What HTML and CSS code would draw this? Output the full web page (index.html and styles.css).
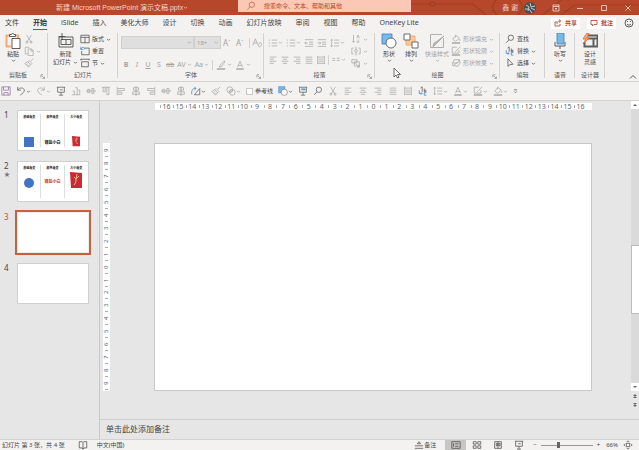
FILE: index.html
```html
<!DOCTYPE html>
<html lang="zh-CN">
<head>
<meta charset="utf-8">
<meta name="viewport" content="width=device-width, initial-scale=1">
<title>新建 Microsoft PowerPoint 演示文稿.pptx</title>
<link rel="stylesheet" href="styles.css">
</head>
<body>
<svg class="defs" aria-hidden="true">
  <symbol id="caret" viewBox="0 0 6 6"><path d="M1.200 2.200 3 4l1.800-1.800" /></symbol>
  <symbol id="launch" viewBox="0 0 6 6"><path d="M1 4V1h3M2.500 2.500l2.500 2.500M5.500 3v2.500H3"/></symbol>
  <symbol id="search" viewBox="0 0 12 12"><circle cx="7" cy="4.500" r="3.200"/><path d="M4.700 7 1.500 10.500"/></symbol>
  <symbol id="cut" viewBox="0 0 12 12"><path d="M3 1l5 8M9 1 4 9"/><circle cx="3.500" cy="9.800" r="1.200"/><circle cx="8.500" cy="9.800" r="1.200"/></symbol>
  <symbol id="copy" viewBox="0 0 12 12"><path d="M4.500 9.500H1.500v-8h4l1 1M5 3.500h4l2 2v6H5zM8.500 3.500V6H11"/></symbol>
  <symbol id="brush" viewBox="0 0 12 12"><path d="M11 1 8 4M6 3l3.500 3.500L8 8 4.500 4.500zM4.500 4.500 1 6.500 5.500 11 8 8M3 8l1.500-1M4.500 9.500 6 8"/></symbol>
  <symbol id="lines-l" viewBox="0 0 12 12"><path d="M2 2.500h8M2 5h5M2 7.500h8M2 10h5"/></symbol>
  <symbol id="lines-c" viewBox="0 0 12 12"><path d="M2 2.500h8M3.500 5h5M2 7.500h8M3.500 10h5"/></symbol>
  <symbol id="lines-r" viewBox="0 0 12 12"><path d="M2 2.500h8M5 5h5M2 7.500h8M5 10h5"/></symbol>
  <symbol id="lines-j" viewBox="0 0 12 12"><path d="M2 2.500h8M2 5h8M2 7.500h8M2 10h8"/></symbol>
  <symbol id="lines-d" viewBox="0 0 12 12"><path d="M2 1v10M10 1v10M2 2.500h8M3 5h6M3 7.500h6M2 10h8"/></symbol>
  <symbol id="list" viewBox="0 0 12 12"><path d="M4.500 2.500H11M4.500 6H11M4.500 9.500H11M1 2.500h1.500M1 6h1.500M1 9.500h1.500"/></symbol>
  <symbol id="outdent" viewBox="0 0 12 12"><path d="M1 2h10M6 5h5M6 7.500h5M1 10h10M4.500 6h-3.500M2.500 4.500 1 6l1.500 1.500"/></symbol>
  <symbol id="indent" viewBox="0 0 12 12"><path d="M1 2h10M6 5h5M6 7.500h5M1 10h10M1 6h3.500M3 4.500 4.500 6 3 7.500"/></symbol>
  <symbol id="spacing" viewBox="0 0 12 12"><path d="M5 2.500h6M5 6h6M5 9.500h6M2 1.500v9M.800 3 2 1.500 3.200 3M.800 9 2 10.500 3.200 9"/></symbol>
  <symbol id="textdir" viewBox="0 0 12 12"><path d="M3 1v9M1.500 8.500 3 10l1.500-1.500M7 5l1.500-4L10 5M8.500 6.500v4M7 9l1.500 1.500L10 9"/></symbol>
  <symbol id="valign" viewBox="0 0 12 12"><path d="M3 2.500H1v7h2M9 2.500h2v7H9M3.500 6h5M6 .500v4M6 7.500v4M4.800 3.500 6 4.700l1.200-1.200M4.800 8.500 6 7.300l1.200 1.200"/></symbol>
  <symbol id="smart" viewBox="0 0 12 12"><path d="M1 2h6v4H1zM4 4.500h6v5H4zM6 7l4 4M10 8v3H7"/></symbol>
  <symbol id="columns" viewBox="0 0 12 12"><path d="M1.500 4h3.500M7 4h3.500M1.500 6.500h3.500M7 6.500h3.500"/></symbol>
  <symbol id="bucket" viewBox="0 0 12 12"><path d="M5.500 1v3M6 2 2 6l3.500 3L10 5zM10.500 6v2"/><path class="bar" d="M1 10.800h10"/></symbol>
  <symbol id="outline" viewBox="0 0 12 12"><path d="M7 1.500H1.500v7h8V5M11 1 5.500 6.500 5 7.500"/><path class="bar" d="M1 10.800h10"/></symbol>
  <symbol id="effect" viewBox="0 0 12 12"><path d="M4 2h6L8 6H2zM2 6v3l6 1 3-4-1-4M3 9l5-4"/></symbol>
  <symbol id="fontcolor" viewBox="0 0 12 12"><path d="M3 8.500 6 1.500l3 7M4 6.500h4"/><path class="bar" d="M1.500 10.800h9"/></symbol>
  <symbol id="marker" viewBox="0 0 12 12"><path d="M10 1 5 6 4 8.500 6.500 8l4-5.500z"/><path class="bar" d="M1 10.800h10"/></symbol>
  <symbol id="replace" viewBox="0 0 12 12"><path d="M3 2.500 5 1v6M7.500 3v4h2V5h-2"/><path class="blue" d="M1.500 5v4h3M3.500 7.500 5 9l-1.500 1.500M10 8H7.500v3H10"/></symbol>
  <symbol id="arrow" viewBox="0 0 12 12"><path d="M3.500 1v9L6 8l3.500-.500z"/></symbol>
  <symbol id="shapes" viewBox="0 0 16 16"><path class="bluefill" d="M1 1h10v10H1z"/><circle class="white" cx="10" cy="10" r="5"/></symbol>
  <symbol id="present" viewBox="0 0 12 12"><path d="M1 1.500h10M2 1.500v6h8v-6M6 7.500V11M3.500 11h5M5 4.500h3"/></symbol>
  <symbol id="al-b" viewBox="0 0 12 12"><path d="M1 10.500h10M2 6h2v4.500M5 2h2.500v8.500M8.500 5h2v5"/></symbol>
  <symbol id="al-m" viewBox="0 0 12 12"><path d="M0 6h12M2 4h2.500v4H2zM7 3h2.500v6H7z"/></symbol>
  <symbol id="al-t" viewBox="0 0 12 12"><path d="M1 1.500h10M2.500 1.500V7H5V1.500M7 1.500v9h2.500v-9"/></symbol>
  <symbol id="al-l" viewBox="0 0 12 12"><path d="M1.500 1v10M2 3h8v2.500H2M2 7.500h5V10H2"/></symbol>
  <symbol id="al-c" viewBox="0 0 12 12"><path d="M6 0v12M3 2h6v3H3zM2 7h8v3H2z"/></symbol>
  <symbol id="al-r" viewBox="0 0 12 12"><path d="M10.500 1v10M10 3H2v2.500h8M10 7.500H5V10h5"/></symbol>
  <symbol id="undo" viewBox="0 0 12 12"><path d="M2 1v4h4M2 5c2-4 8-3 8 0 0 2-2 4-5 6"/></symbol>
</svg>

<header class="titlebar">
  <h1 class="doc">新建 Microsoft PowerPoint 演示文稿.pptx <svg class="i6"><use href="#caret"/></svg></h1>
  <label class="find"><svg class="i10"><use href="#search"/></svg><input type="search" aria-label="搜索" placeholder="搜索命令、文本、帮助和其他"></label>
  <div class="account">
    <svg class="circuit" viewBox="0 0 170 15" preserveAspectRatio="none" aria-hidden="true"><path d="M0 4h14M18 4h28l10 11M112 15l10-10h48M132 15h38M98 15 112 0"/><circle cx="16" cy="4" r="2"/><circle cx="72" cy="7" r="11"/></svg>
    <span class="user">鑫 谢</span>
    <svg class="avatar" viewBox="0 0 12 12"><circle cx="6" cy="6" r="6" fill="#4b4f50"/><path d="M2 3l3 2-1 4M6 1l1 4 4-1M5 7l3 4M7 6l4 2M1 7h3" stroke="#dfe3e3" fill="none"/></svg>
    <button aria-label="功能区显示选项"><svg class="i8" viewBox="0 0 8 8"><path d="M1 1h6v6H1zM1 2.500h6M4 6V4M3 5l1-1 1 1"/></svg></button>
    <button aria-label="最小化"><svg class="i8" viewBox="0 0 8 8"><path d="M1 4.500h6"/></svg></button>
    <button aria-label="还原"><svg class="i8" viewBox="0 0 8 8"><path d="M1.500 1.500h5v5h-5z"/></svg></button>
    <button aria-label="关闭"><svg class="i8" viewBox="0 0 8 8"><path d="M1.500 1.500l5 5M6.500 1.500l-5 5"/></svg></button>
  </div>
</header>

<nav class="tabs">
  <a href="#">文件</a><a href="#" class="current">开始</a><a href="#">iSlide</a><a href="#">插入</a><a href="#">美化大师</a><a href="#">设计</a><a href="#">切换</a><a href="#">动画</a><a href="#">幻灯片放映</a><a href="#">审阅</a><a href="#">视图</a><a href="#">帮助</a><a href="#">OneKey Lite</a>
  <div class="tab-actions">
    <button class="pill"><svg class="i8" viewBox="0 0 8 8"><path d="M3 3H1v4h5V5M3 5c0-2 1-3 3-3M5 .500 6.800 2 5 3.500"/></svg>共享</button>
    <button class="pill"><svg class="i8" viewBox="0 0 8 8"><path d="M1 1.500h6v4H4L2.500 7V5.500H1z"/></svg>批注</button>
    <button class="smile" aria-label="反馈"><svg class="i10" viewBox="0 0 10 10"><circle cx="5" cy="5" r="4"/><path d="M3 6c1 1.500 3 1.500 4 0M3.500 3v1M6.500 3v1"/></svg></button>
  </div>
</nav>

<section class="ribbon" aria-label="开始">
  <div class="group g-clip">
    <div class="body">
      <button class="big"><svg class="i16" viewBox="0 0 16 16"><path class="orange" d="M5 2.500H1.500v11H6M10 2.500h3V5"/><path d="M4.500 3.500v-2h2C6.500 0 9 0 9 1.500h1.500v2zM7 5.500h8v10H7z" fill="#fff"/></svg><span>粘贴</span><svg class="i6"><use href="#caret"/></svg></button>
      <div class="stack off"><button aria-label="剪切"><svg class="i10"><use href="#cut"/></svg></button><button aria-label="复制"><svg class="i10"><use href="#copy"/></svg><svg class="i6"><use href="#caret"/></svg></button><button aria-label="格式刷"><svg class="i10"><use href="#brush"/></svg></button></div>
    </div>
    <footer>剪贴板<svg class="i6 launch"><use href="#launch"/></svg></footer>
  </div>
  <div class="group g-slides">
    <div class="body">
      <button class="big"><svg class="i16" viewBox="0 0 16 16"><path d="M1 4h14v10H1zM3 6.500h10M8 6.500v5M3 6.500v5h10v-5M4 0v7M.500 3.500h7"/></svg><span>新建</span><span class="with-caret">幻灯片<svg class="i6"><use href="#caret"/></svg></span></button>
      <div class="stack"><button><svg class="i10" viewBox="0 0 12 12"><path d="M1 1.500h10v9H1zM1 4h10M6 4v6.500"/></svg>版式<svg class="i6"><use href="#caret"/></svg></button><button><svg class="i10" viewBox="0 0 12 12"><path d="M5 2.500h6v8H2V6"/><path class="blue" d="M1 1v3h3M1 4c1-3 4-3 5 0"/></svg>重置</button><button><svg class="i10" viewBox="0 0 12 12"><path d="M1 1.500h10M2 4.500h8v6H2zM1 1v2M11 1v2"/></svg>节<svg class="i6"><use href="#caret"/></svg></button></div>
    </div>
    <footer>幻灯片</footer>
  </div>
  <div class="group g-font off">
    <div class="body rows">
      <div class="row"><span class="combo"><select class="family" aria-label="字体" disabled><option></option></select><svg class="i6"><use href="#caret"/></svg></span><span class="combo"><select class="size" aria-label="字号" disabled><option>18+</option></select><svg class="i6"><use href="#caret"/></svg></span><button class="glyph">A<sup>ˆ</sup></button><button class="glyph">A<sup>ˇ</sup></button><i class="sep"></i><button aria-label="清除格式"><svg class="i10" viewBox="0 0 12 12"><path d="M1 9 4 1l3 7M2 6h4M7 9l3-4 2 2-3 4z"/></svg></button></div>
      <div class="row letters"><button><b>B</b></button><button><em>I</em></button><button><u>U</u></button><button>S</button><button><s>ab</s></button><button>AV<svg class="i6"><use href="#caret"/></svg></button><button>Aa<svg class="i6"><use href="#caret"/></svg></button><i class="sep"></i><button aria-label="突出显示"><svg class="i10"><use href="#marker"/></svg><svg class="i6"><use href="#caret"/></svg></button><button aria-label="字体颜色"><svg class="i10"><use href="#fontcolor"/></svg><svg class="i6"><use href="#caret"/></svg></button></div>
    </div>
    <footer>字体<svg class="i6 launch"><use href="#launch"/></svg></footer>
  </div>
  <div class="group g-para off">
    <div class="body">
      <div class="rows">
        <div class="row lists"><button aria-label="项目符号"><svg class="i10"><use href="#list"/></svg><svg class="i6"><use href="#caret"/></svg></button><button aria-label="编号"><svg class="i10"><use href="#list"/></svg><svg class="i6"><use href="#caret"/></svg></button><button aria-label="减少缩进"><svg class="i10"><use href="#outdent"/></svg></button><button aria-label="增加缩进"><svg class="i10"><use href="#indent"/></svg></button><button aria-label="行距"><svg class="i10"><use href="#spacing"/></svg><svg class="i6"><use href="#caret"/></svg></button></div>
        <div class="row"><button aria-label="左对齐"><svg class="i10"><use href="#lines-l"/></svg></button><button aria-label="居中"><svg class="i10"><use href="#lines-c"/></svg></button><button aria-label="右对齐"><svg class="i10"><use href="#lines-r"/></svg></button><button aria-label="两端对齐"><svg class="i10"><use href="#lines-j"/></svg></button><button aria-label="分散对齐"><svg class="i10"><use href="#lines-d"/></svg></button><i class="sep"></i><button aria-label="分栏"><svg class="i10"><use href="#columns"/></svg><svg class="i6"><use href="#caret"/></svg></button></div>
      </div>
      <div class="stack"><button aria-label="文字方向"><svg class="i10"><use href="#textdir"/></svg><svg class="i6"><use href="#caret"/></svg></button><button aria-label="对齐文本"><svg class="i10"><use href="#valign"/></svg><svg class="i6"><use href="#caret"/></svg></button><button aria-label="转换为 SmartArt"><svg class="i10"><use href="#smart"/></svg><svg class="i6"><use href="#caret"/></svg></button></div>
    </div>
    <footer>段落<svg class="i6 launch"><use href="#launch"/></svg></footer>
  </div>
  <div class="group g-draw">
    <div class="body">
      <button class="big"><svg class="i16"><use href="#shapes"/></svg><span>形状</span><svg class="i6"><use href="#caret"/></svg></button>
      <button class="big"><svg class="i16" viewBox="0 0 16 16"><path class="peach" d="M3 3h9v9H3z"/><path class="white" d="M1 1h6v6H1zM9 9h6v6H9z"/></svg><span>排列</span><svg class="i6"><use href="#caret"/></svg></button>
      <button class="big off"><svg class="i16" viewBox="0 0 16 16"><path d="M14.500 5v9.500h-13v-13H13"/><path d="M15 3 8 10l-4 4 1-4 2-1z" fill="#bbb"/></svg><span>快速样式</span><svg class="i6"><use href="#caret"/></svg></button>
      <div class="stack off"><button><svg class="i10"><use href="#bucket"/></svg>形状填充<svg class="i6"><use href="#caret"/></svg></button><button><svg class="i10"><use href="#outline"/></svg>形状轮廓<svg class="i6"><use href="#caret"/></svg></button><button><svg class="i10"><use href="#effect"/></svg>形状效果<svg class="i6"><use href="#caret"/></svg></button></div>
    </div>
    <footer>绘图<svg class="i6 launch"><use href="#launch"/></svg></footer>
    <svg class="pointer" viewBox="0 0 8 12" aria-hidden="true"><path d="M1 1v9l2-2 1.500 3 1.500-.700L4.600 7.500H7.500z" fill="#fff" stroke="#555"/></svg>
  </div>
  <div class="group g-edit">
    <div class="body"><div class="stack"><button><svg class="i10"><use href="#search"/></svg>查找</button><button><svg class="i10"><use href="#replace"/></svg>替换<svg class="i6"><use href="#caret"/></svg></button><button><svg class="i10"><use href="#arrow"/></svg>选择<svg class="i6"><use href="#caret"/></svg></button></div></div>
    <footer>编辑</footer>
  </div>
  <div class="group g-voice">
    <div class="body"><button class="big"><svg class="i16" viewBox="0 0 16 16"><path d="M3 9v4h10V9M8 13v3"/><path class="bluefill" d="M5 0h7v11H5z"/></svg><span>听写</span><svg class="i6"><use href="#caret"/></svg></button></div>
    <footer>语音</footer>
  </div>
  <div class="group g-ideas">
    <div class="body"><button class="big"><svg class="i16" viewBox="0 0 16 16"><path class="dark" d="M6 2.500h9.500v11H2.500V9M5 5.500h10.500M11.500 5.500v8"/><path class="bolt" d="M5 0 1 6h3L1 11l6-6H4.500L7 0z"/></svg><span>设计</span><span>灵感</span></button></div>
    <footer>设计器</footer>
  </div>
  <button class="collapse" aria-label="折叠功能区"><svg class="i8" viewBox="0 0 8 8"><path d="M1 5.500 4 2.500l3 3"/></svg></button>
</section>

<section class="quick off" aria-label="快速访问工具栏">
  <button aria-label="保存"><svg class="i10 plum" viewBox="0 0 12 12"><path d="M1 1h10v10H1zM3 1v4h6V1M3.500 11V8h5v3"/></svg></button>
  <button class="on" aria-label="撤消"><svg class="i10"><use href="#undo"/></svg><svg class="i6"><use href="#caret"/></svg></button>
  <button aria-label="恢复"><svg class="i10 flip"><use href="#undo"/></svg><svg class="i6"><use href="#caret"/></svg></button>
  <button class="on" aria-label="从头放映"><svg class="i10"><use href="#present"/></svg></button>
  <button aria-label="底端对齐"><svg class="i10"><use href="#al-b"/></svg></button>
  <button aria-label="垂直居中"><svg class="i10"><use href="#al-m"/></svg></button>
  <button aria-label="顶端对齐"><svg class="i10"><use href="#al-t"/></svg></button>
  <button aria-label="左对齐"><svg class="i10"><use href="#al-l"/></svg></button>
  <button aria-label="水平居中"><svg class="i10"><use href="#al-c"/></svg></button>
  <button aria-label="右对齐"><svg class="i10"><use href="#al-r"/></svg></button>
  <button aria-label="横向分布"><svg class="i10"><use href="#al-m"/></svg></button>
  <button aria-label="纵向分布"><svg class="i10"><use href="#al-c"/></svg></button>
  <button class="on" aria-label="旋转"><svg class="i10" viewBox="0 0 12 12"><path d="M10.500 3v7.500H4z"/><path class="blue" d="M1 10C0 5 3 2 6 3M4 1l2 2-2 2"/></svg><svg class="i6"><use href="#caret"/></svg></button>
  <button aria-label="格式刷"><svg class="i10"><use href="#brush"/></svg></button>
  <button aria-label="合并形状"><svg class="i10" viewBox="0 0 12 12"><circle cx="4.500" cy="4.500" r="3.500"/><circle cx="7.500" cy="7.500" r="3.500"/><path d="M4 7l3-3M5 8l3-3"/></svg><svg class="i6"><use href="#caret"/></svg></button>
  <label class="guide"><input type="checkbox">参考线</label>
  <button class="on" aria-label="形状"><svg class="i10"><use href="#shapes"/></svg><svg class="i6"><use href="#caret"/></svg></button>
  <button class="on" aria-label="放映"><svg class="i10" viewBox="0 0 12 12"><path d="M1 1.500h10M2 1.500v6h8v-6M6 7.500V11M3.500 11h5"/><path class="blue" d="M4 4.500h5M4 3.500h5"/></svg></button>
  <button class="on" aria-label="查找"><svg class="i10"><use href="#search"/></svg></button>
  <button aria-label="剪切"><svg class="i10"><use href="#cut"/></svg></button>
  <button aria-label="文本左对齐"><svg class="i10"><use href="#lines-l"/></svg></button>
  <button aria-label="文本居中"><svg class="i10"><use href="#lines-c"/></svg></button>
  <button aria-label="文本右对齐"><svg class="i10"><use href="#lines-r"/></svg></button>
  <button aria-label="文本两端对齐"><svg class="i10"><use href="#lines-j"/></svg></button>
  <button aria-label="文本分散对齐"><svg class="i10"><use href="#lines-d"/></svg></button>
  <button class="on" aria-label="替换"><svg class="i10"><use href="#replace"/></svg></button>
  <button aria-label="行距"><svg class="i10"><use href="#spacing"/></svg><svg class="i6"><use href="#caret"/></svg></button>
  <button aria-label="字体颜色"><svg class="i10"><use href="#fontcolor"/></svg><svg class="i6"><use href="#caret"/></svg></button>
  <button aria-label="形状轮廓"><svg class="i10"><use href="#outline"/></svg><svg class="i6"><use href="#caret"/></svg></button>
  <button aria-label="形状填充"><svg class="i10"><use href="#bucket"/></svg><svg class="i6"><use href="#caret"/></svg></button>
  <button class="on" aria-label="自定义"><svg class="i6" viewBox="0 0 6 6"><path d="M1 1h4M1.500 3 3 4.500 4.500 3"/></svg></button>
</section>

<main class="work">
  <ol class="thumbs">
    <li><span class="no">1</span><div class="thumb trio">
      <div><b>基础渐变</b><i class="square"></i></div><div><b>颜色渐变</b><strong>锂盐小白</strong></div><div><b>大小渐变</b><svg class="card small" viewBox="0 0 12 17" preserveAspectRatio="none"><path class="paper" d="M0 0 12 1v15H1z"/><path class="branch" d="M4 5l2 2 1-5M6 7l3-3M6 7v3l3 2"/></svg></div></div></li>
    <li><span class="no">2<small>★</small></span><div class="thumb trio mid">
      <div><b>基础渐变</b><i class="disc"></i></div><div><b>颜色渐变</b><strong class="red">锂盐小白</strong></div><div><b>大小渐变</b><svg class="card" viewBox="0 0 12 17" preserveAspectRatio="none"><path class="paper" d="M0 0 12 1v15H1z"/><path class="branch" d="M4 5l2 2 1-5M6 7l3-3M6 7v3l-2 3"/></svg></div></div></li>
    <li class="active"><span class="no">3</span><div class="thumb"></div></li>
    <li><span class="no">4</span><div class="thumb"></div></li>
  </ol>
  <section class="editor">
    <div class="canvas">
      <div class="ruler across"><span>16</span><span>15</span><span>14</span><span>13</span><span>12</span><span>11</span><span>10</span><span>9</span><span>8</span><span>7</span><span>6</span><span>5</span><span>4</span><span>3</span><span>2</span><span>1</span><span>0</span><span>1</span><span>2</span><span>3</span><span>4</span><span>5</span><span>6</span><span>7</span><span>8</span><span>9</span><span>10</span><span>11</span><span>12</span><span>13</span><span>14</span><span>15</span><span>16</span></div>
      <div class="ruler down"><span>9</span><span>8</span><span>7</span><span>6</span><span>5</span><span>4</span><span>3</span><span>2</span><span>1</span><span>0</span><span>1</span><span>2</span><span>3</span><span>4</span><span>5</span><span>6</span><span>7</span><span>8</span><span>9</span></div>
      <div class="slide"></div>
      <div class="scroll">
        <button aria-label="向上滚动"><svg viewBox="0 0 8 8"><path d="M2 5l2-2 2 2z"/></svg></button>
        <div class="track"><div class="grip"></div></div>
        <button aria-label="向下滚动"><svg viewBox="0 0 8 8"><path d="M2 3l2 2 2-2z"/></svg></button>
        <button class="plain" aria-label="上一张"><svg viewBox="0 0 8 8"><path d="M2 4l2-2 2 2zM2 6l2-2 2 2z"/></svg></button>
        <button class="plain" aria-label="下一张"><svg viewBox="0 0 8 8"><path d="M2 2l2 2 2-2zM2 4l2 2 2-2z"/></svg></button>
      </div>
    </div>
    <p class="notes">单击此处添加备注</p>
  </section>
</main>

<footer class="status">
  <span>幻灯片 第 3 张，共 4 张</span>
  <svg class="i10" viewBox="0 0 12 12"><path d="M6 3v8M6 3 5 2H1.500v7.500H5L6 11l1-1.500h3.500V2H7z"/></svg>
  <span>中文(中国)</span>
  <div class="views">
    <button class="note-btn"><svg class="i10" viewBox="0 0 12 12"><path d="M1 7h10M1 10h10M4 4.500 6 2l2 2.500z"/></svg>备注</button>
    <button class="view active" aria-label="普通视图"><svg class="i10" viewBox="0 0 12 12"><path d="M1 2h10v8H1zM3 4v4M5 4.500h4M5 7.500h4"/></svg></button>
    <button class="view" aria-label="幻灯片浏览"><svg class="i10" viewBox="0 0 12 12"><path d="M1.500 2h3.500v3H1.500zM7 2h3.500v3H7zM1.500 7h3.500v3H1.500zM7 7h3.500v3H7z"/></svg></button>
    <button class="view" aria-label="阅读视图"><svg class="i10" viewBox="0 0 12 12"><path d="M2 2h8v8H2zM4 4h1.500v3H4zM7 4h1.500v3H7zM6 2v8"/></svg></button>
    <button class="view" aria-label="幻灯片放映"><svg class="i10"><use href="#present"/></svg></button>
    <button class="step" aria-label="缩小">−</button>
    <input type="range" aria-label="缩放" min="10" max="180" value="66">
    <button class="step" aria-label="放大">+</button>
    <span class="pct">66%</span>
    <button aria-label="适应窗口"><svg class="i10" viewBox="0 0 12 12"><path d="M4 4h4v4H4zM4.500 2.500 6 1l1.500 1.500M4.500 9.500 6 11l1.500-1.500M2.500 4.500 1 6l1.500 1.500M9.500 4.500 11 6 9.500 7.500"/></svg></button>
  </div>
</footer>
</body>
</html>
```

FILE: styles.css
```css
* { box-sizing: border-box; }
body {
  margin: 0; min-height: 100vh; display: flex; flex-direction: column;
  font: 7px/8px "Noto Sans", "Noto Sans CJK SC", sans-serif;
  color: #444; background: #e6e6e6; overflow: hidden;
}
button, select, input { font: inherit; color: inherit; }
button { display: flex; align-items: center; padding: 0; border: 0; background: none; white-space: nowrap; }
svg { fill: none; stroke: currentColor; stroke-width: 1; stroke-opacity: .85; flex: none; }
.defs { position: absolute; width: 0; height: 0; }
.i6 { width: 5px; height: 5px; }
.i8 { width: 8px; height: 8px; }
.i10 { width: 10px; height: 10px; }
.i16 { width: 16px; height: 16px; }
.blue { stroke: #2f78c4; }
.orange { stroke: #eda25c; stroke-width: 2; }
.bluefill { fill: #7ab8e6; stroke: #3c87c8; }
.peach { fill: #f9c89b; stroke: #eda25c; }
.white { fill: #fff; stroke: #555; }
.dark { stroke-width: 2; }
.bolt { fill: #f9b48a; stroke: #e0662e; }
.bar { stroke-width: 2; }
.off, .off button { color: #a3a3a3; }
.off .on { color: #555; }
.sep { width: 1px; height: 10px; background: #d2d2d2; }

.titlebar {
  display: grid; grid-template-columns: 238px minmax(100px, 173px) 1fr;
  height: 15px; background: #b7472a; color: #f6d5cb; align-items: center;
}
.doc { margin: 0; padding-left: 56px; font: 7px/8px "Liberation Sans", "Noto Sans CJK SC", sans-serif; display: flex; align-items: center; white-space: nowrap; }
.find { display: flex; align-items: center; gap: 8px; height: 12px; padding-left: 8px; background: #fac8b4; color: #c0593c; align-self: start; font-size: 6px; }
.find input { flex: 1; min-width: 0; padding: 0; border: 0; background: none; outline: 0; appearance: none; }
.find input::placeholder { color: #b7472a; opacity: 1; }
.account { position: relative; display: flex; align-items: center; justify-content: flex-end; height: 15px; gap: 16px; padding-right: 7px; overflow: hidden; }
.circuit { position: absolute; inset: 0; width: 100%; height: 100%; color: #9c3b22; }
.account button, .user, .avatar { position: relative; }
.avatar { width: 12px; height: 12px; stroke: none; margin-left: -10px; }

.tabs { display: flex; gap: 14px; align-items: center; height: 16px; padding: 0 5px; background: #f3f2f1; }
.tabs a { color: #444; text-decoration: none; white-space: nowrap; line-height: 13px; border-bottom: 1px solid transparent; }
.tabs .current { font-weight: 700; color: #333; border-bottom: 1px solid #c43e1c; }
.tab-actions { display: flex; align-items: center; gap: 7px; margin-left: auto; }
.pill { gap: 3px; height: 11px; min-width: 29px; justify-content: center; background: #fff; color: #b7472a; font-size: 6px; font-weight: 700; }
.smile { margin-left: 1px; }

.ribbon { display: flex; height: 51px; background: #f3f2f1; border-bottom: 1px solid #d4d2d0; font-size: 6px; }
.group { position: relative; display: flex; flex-direction: column; padding-top: 2px; }
.group::after { content: ""; position: absolute; right: 0; top: 2px; bottom: 3px; width: 1px; background: #d4d2d0; }
.body { display: flex; flex: 1; gap: 6px; }
.group footer { position: relative; height: 9px; margin-bottom: 1px; text-align: center; color: #555; }
.launch { position: absolute; right: 3px; top: 3px; color: #888; }
.big { flex-direction: column; align-self: flex-start; }
.big .i16 { margin-bottom: 1px; }
.with-caret { display: flex; align-items: center; gap: 2px; }
.stack { display: flex; flex-direction: column; justify-content: space-between; height: 36px; }
.stack button { height: 12px; gap: 2px; }
.rows { display: flex; flex-direction: column; justify-content: space-between; gap: 0; height: 33px; padding-top: 3px; }
.row { display: flex; align-items: center; height: 13px; gap: 2px; }
.g-clip { width: 48px; }
.g-clip .body { padding-left: 5px; gap: 3px; }
.g-clip footer { padding-right: 12px; }
.g-slides { width: 70px; }
.g-slides .body { padding-left: 5px; gap: 2px; }
.g-font { width: 146px; }
.g-font .body { padding-left: 3px; gap: 0; }
.combo { position: relative; display: flex; }
.combo svg { position: absolute; right: 2px; top: 4px; }
.combo + .combo { margin-left: -2px; }
.family, .size { appearance: none; height: 13px; padding: 0 2px; border: 1px solid #d0d0d0; background: #dfdfdf; color: #a3a3a3; opacity: 1; border-radius: 0; }
.family { width: 73px; }
.size { width: 27px; }
.glyph { min-width: 11px; font-size: 8px; }
.letters { padding-left: 1px; gap: 3px; font-size: 7px; }
.letters button { min-width: 8px; gap: 1px; justify-content: center; }
.g-font sup { font-size: 5px; line-height: 5px; }
.g-para { width: 111px; }
.g-para .body { padding-left: 4px; gap: 5px; }
.lists { gap: 3px; }
.g-draw { width: 125px; }
.g-draw .body { padding-left: 6px; gap: 6px; }
.g-draw .stack { margin-left: -4px; }
.pointer { position: absolute; left: 18px; top: 36px; width: 8px; height: 12px; }
.g-edit { width: 45px; }
.g-edit .body { padding-left: 5px; }
.g-voice { width: 30px; }
.g-ideas { width: 30px; }
.g-voice .body, .g-ideas .body { justify-content: center; }
.collapse { margin: auto 2px 0 auto; height: 9px; }

.quick { display: flex; align-items: center; gap: 5px; height: 19px; padding: 0 1px; background: #f3f2f1; border-bottom: 1px solid #d4d2d0; }
.plum { color: #8a6c96; }
.flip { transform: scaleX(-1); }
.guide { display: flex; align-items: center; gap: 2px; color: #444; font-size: 6px; white-space: nowrap; }
.guide input { appearance: none; width: 7px; height: 7px; margin: 0; background: #fff; border: 1px solid #c8c8c8; }

.work { display: grid; grid-template-columns: 100px 1fr; flex: 1; }
.thumbs { margin: 0; padding: 9px 10px 0 4px; list-style: none; display: flex; flex-direction: column; gap: 10px; border-right: 1px solid #c9c9c9; }
.thumbs li { display: flex; gap: 7px; }
.no { width: 6px; font-size: 8px; line-height: 9px; }
.no small { display: block; font-size: 6px; line-height: 8px; color: #777; }
.thumb { width: 72px; height: 41px; background: #fff; border: 1px solid #d0d0d0; }
.active .thumb { outline: 2px solid #c8603f; border-color: #eee; }
.active .no { color: #c8512f; }
.trio { display: grid; grid-template-columns: 1fr 1fr 1fr; padding: 3px 0; }
.trio div { display: flex; flex-direction: column; align-items: center; justify-content: space-between; border-right: 1px solid #ddd; }
.trio div:last-child { border: 0; }
.trio b { font-size: 3px; line-height: 6px; color: #111; white-space: nowrap; }
.trio strong { font-size: 4px; line-height: 8px; color: #222; white-space: nowrap; }
.trio .red { color: #c6402c; }
.square { width: 10px; height: 10px; background: #4472c4; }
.disc { width: 10px; height: 10px; border-radius: 50%; background: #4472c4; }
.card { width: 12px; height: 17px; stroke-opacity: 1; }
.card.small { width: 8px; height: 11px; }
.paper { fill: #c92a35; stroke: none; }
.branch { stroke: #eab987; }
.mid div { justify-content: flex-start; }
.mid .disc, .mid strong { margin-top: 7px; }
.mid .card { margin-top: 1px; }

.editor { display: flex; flex-direction: column; min-width: 0; }
.canvas { flex: 1; display: grid; grid-template-columns: 3px 7px 44px 1fr 39px 8px; grid-template-rows: 2px 7px 33px auto 1fr; }
.ruler { display: flex; background: #fff; font-size: 7px; line-height: 7px; color: #666; }
.ruler span { position: relative; flex: 1; text-align: center; }
.across { grid-area: 2 / 4; padding: 0 5px; margin-left: 1px; }
.across span { width: 0; }
.ruler span::before { content: ""; position: absolute; background: #aaa; }
.across span::before { left: 0; top: 2px; width: 1px; height: 3px; }
.down { grid-area: 4 / 2; flex-direction: column; padding: 1px 0; font-size: 6px; }
.down span { writing-mode: vertical-rl; transform: rotate(180deg); line-height: 7px; min-height: 0; }
.down span::before { top: 0; left: 2px; width: 3px; height: 1px; }
.slide { grid-area: 4 / 4; aspect-ratio: 438 / 248; background: #fff; border: 1px solid #c9c9c9; }
.scroll { grid-area: 1 / 6 / 6 / 7; display: flex; flex-direction: column; background: #e6e6e6; }
.scroll button { height: 8px; background: #fff; justify-content: center; }
.scroll svg { width: 8px; height: 8px; fill: #666; stroke: none; }
.scroll .plain { background: none; margin-top: 1px; }
.track { flex: 1; display: grid; grid-template-rows: 137fr 69fr 70fr; background: #dadada; }
.grip { grid-row: 2; background: #fff; border: 1px solid #bbb; border-right: 0; }
.scroll::after { content: ""; height: 10px; }
.notes { margin: 0; height: 20px; padding-left: 6px; border-top: 1px solid #cfcfcf; font-size: 8px; line-height: 17px; }

.status { display: flex; align-items: center; gap: 9px; height: 11px; padding: 0 6px 0 2px; background: #f3f2f1; border-top: 1px solid #d4d2d0; font-size: 6px; white-space: nowrap; }
.status > .i10 { margin-left: 4px; }
.views { display: flex; align-items: center; margin-left: auto; }
.note-btn { margin-right: 9px; }
.view { width: 21px; height: 10px; justify-content: center; }
.view.active { background: #c8c6c4; }
.step { margin: 0 4px; }
.views input { appearance: none; width: 52px; height: 8px; margin: 0; background: linear-gradient(#999, #999) center / 100% 1px no-repeat; }
.views input::-webkit-slider-thumb { appearance: none; width: 3px; height: 6px; background: #666; }
.pct { margin: 0 5px 0 2px; }
```
